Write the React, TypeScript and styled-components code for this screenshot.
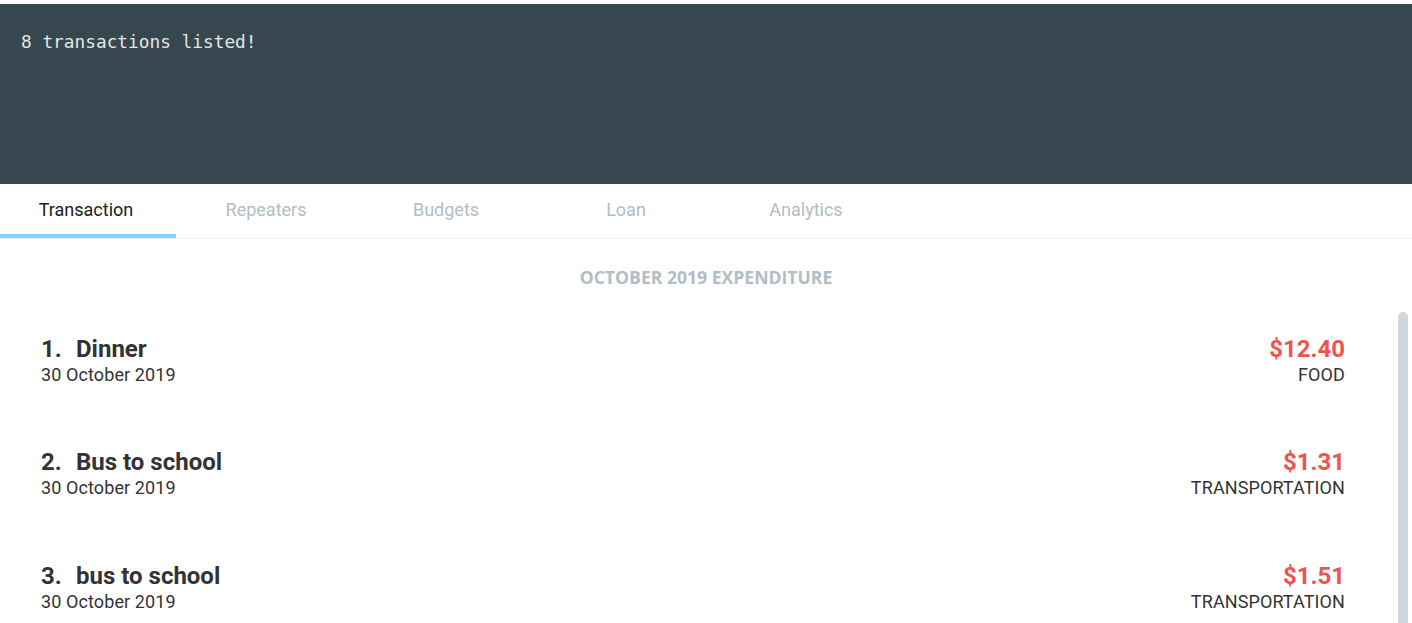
import styled, { createGlobalStyle } from "styled-components";

const GlobalStyle = createGlobalStyle`
  html, body {
    margin: 0;
    padding: 0;
    overflow: hidden;
    background: #ffffff;
  }
  * {
    box-sizing: border-box;
  }
`;

const AppContainer = styled.div`
  display: flex;
  flex-direction: column;
  width: 100vw;
  height: 100vh;
  padding-top: 4px;
  font-family: Roboto, "Liberation Sans", sans-serif;
  overflow: hidden;
`;

const ResultDisplay = styled.div`
  flex-shrink: 0;
  height: 180px;
  background: #37474f;
  color: #e6e6e6;
  font-family: "DejaVu Sans Mono", "Liberation Mono", monospace;
  font-size: 17.8px;
  padding: 27px 21px;
  white-space: pre-wrap;
`;

const TabBar = styled.nav`
  flex-shrink: 0;
  display: flex;
  height: 55px;
  border-bottom: 1px solid #eceff1;
  overflow: hidden;
`;

const TabStrip = styled.div`
  display: flex;
  margin-left: -4px;
`;

const Tab = styled.div<{ $active?: boolean }>`
  width: 180px;
  display: flex;
  align-items: center;
  justify-content: center;
  font-size: 18px;
  color: ${(p) => (p.$active ? "#212121" : "#b0bec5")};
  border-bottom: 4px solid ${(p) => (p.$active ? "#81d4fa" : "transparent")};
`;

const Heading = styled.h2`
  flex-shrink: 0;
  margin: 0;
  padding: 26px 0 0;
  text-align: center;
  font-family: "Open Sans", sans-serif;
  font-weight: 700;
  font-size: 17.6px;
  line-height: 24px;
  color: #b0bec5;
  height: 65px;
`;

const ListArea = styled.div`
  flex: 1;
  min-height: 0;
  display: flex;
`;

const List = styled.div`
  flex: 1;
  overflow-y: auto;
  scrollbar-width: none;
`;

const ScrollTrack = styled.div`
  width: 14px;
  padding: 8px 4px 0 0;
  flex-shrink: 0;
`;

const ScrollThumb = styled.div`
  height: 420px;
  background: #cfd8dc;
  border-radius: 5px 5px 0 0;
`;

const Row = styled.div`
  display: flex;
  justify-content: space-between;
  align-items: center;
  height: 113.5px;
  padding: 0 53px 0 41px;
  color: #333333;
`;

const Left = styled.div`
  display: flex;
  flex-direction: column;
`;

const Right = styled.div`
  display: flex;
  flex-direction: column;
  align-items: flex-end;
`;

const Title = styled.div`
  display: flex;
  font-size: 24px;
  font-weight: 700;
  line-height: 28px;
`;

const Index = styled.span`
  width: 35px;
`;

const Sub = styled.div`
  font-size: 18px;
  line-height: 24px;
  letter-spacing: 0.1px;
`;

const Amount = styled.div`
  font-size: 24px;
  font-weight: 700;
  line-height: 28px;
  color: #ef5350;
`;

const tabs = ["Transaction", "Repeaters", "Budgets", "Loan", "Analytics"];

const transactions = [
  { name: "Dinner", date: "30 October 2019", amount: "$12.40", tag: "FOOD" },
  { name: "Bus to school", date: "30 October 2019", amount: "$1.31", tag: "TRANSPORTATION" },
  { name: "bus to school", date: "30 October 2019", amount: "$1.51", tag: "TRANSPORTATION" },
  { name: "Lunch", date: "29 October 2019", amount: "$5.50", tag: "FOOD" },
  { name: "Movie", date: "28 October 2019", amount: "$9.00", tag: "ENTERTAINMENT" },
  { name: "Books", date: "27 October 2019", amount: "$24.90", tag: "EDUCATION" },
  { name: "Coffee", date: "26 October 2019", amount: "$2.20", tag: "FOOD" },
  { name: "Taxi", date: "25 October 2019", amount: "$14.10", tag: "TRANSPORTATION" },
];

const App = () => {
  return (
    <AppContainer>
      <GlobalStyle />
      <ResultDisplay>8 transactions listed!</ResultDisplay>
      <TabBar>
        <TabStrip>
          {tabs.map((t, i) => (
            <Tab key={t} $active={i === 0}>
              {t}
            </Tab>
          ))}
        </TabStrip>
      </TabBar>
      <Heading>OCTOBER 2019 EXPENDITURE</Heading>
      <ListArea>
        <List>
          {transactions.map((tx, i) => (
            <Row key={i}>
              <Left>
                <Title>
                  <Index>{i + 1}.</Index>
                  {tx.name}
                </Title>
                <Sub>{tx.date}</Sub>
              </Left>
              <Right>
                <Amount>{tx.amount}</Amount>
                <Sub>{tx.tag}</Sub>
              </Right>
            </Row>
          ))}
        </List>
        <ScrollTrack>
          <ScrollThumb />
        </ScrollTrack>
      </ListArea>
    </AppContainer>
  );
};

export default App;
